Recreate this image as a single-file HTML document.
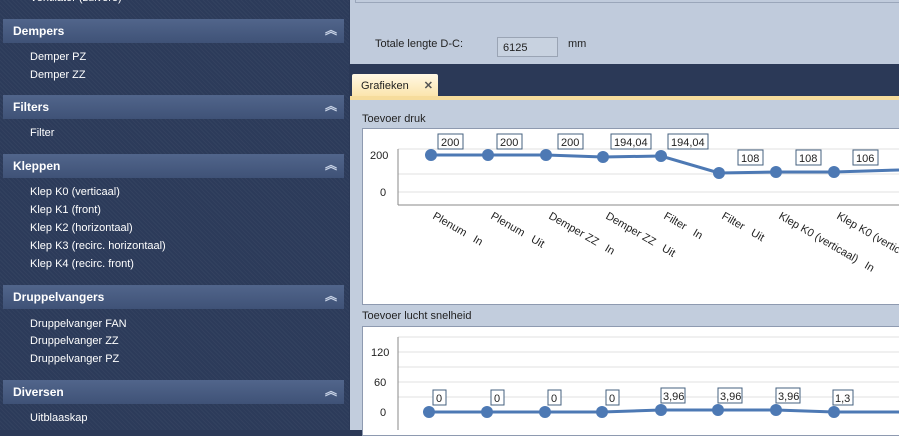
<!DOCTYPE html>
<html><head><meta charset="utf-8"><style>
*{margin:0;padding:0;box-sizing:border-box}
body{width:899px;height:430px;overflow:hidden;font-family:"Liberation Sans",Tahoma,sans-serif;font-size:11px;position:relative;background:#2b3957}
#side{position:absolute;left:0;top:0;width:349px;height:430px;background:#2c3b5a;background-image:repeating-linear-gradient(45deg,rgba(255,255,255,0.03) 0 1px,transparent 1px 3px)}
.hd{position:absolute;left:3px;width:341px;height:24px;background:linear-gradient(#51658b,#3f5277);color:#fff;font-weight:bold;font-size:12px;padding:5px 0 0 10px}
.hd span{position:absolute;right:7px;top:2px;font-size:12px;color:#c8d3e6}
.it{position:absolute;left:30px;color:#fff;font-size:11px}
#top{position:absolute;left:350px;top:0;width:549px;height:64px;background:#c0cbdc}
#top .box{position:absolute;left:5px;top:-2px;width:560px;height:5px;border:1px solid #9aa6ba}
#tab{position:absolute;left:352px;top:74px;width:86px;height:24px;background:linear-gradient(#fff8e4,#fbe3a8);border-radius:2px 2px 0 0;padding:5px 0 0 9px;color:#222}
#yl{position:absolute;left:350px;top:96px;width:549px;height:4px;background:#f6dc9c}
#main{position:absolute;left:350px;top:100px;width:549px;height:330px;background:#c2cddd}
.ttl{position:absolute;color:#222;font-size:11px}
.plot{position:absolute;background:#fff;border:1px solid #8e9ab0}
svg text{white-space:pre}
</style></head><body>
<div id="side">
<div class="it" style="top:-8px">Ventilator (zuivere)</div>
<div class="hd" style="top:19px">Dempers<span>︽</span></div>
<div class="it" style="top:51px">Demper PZ</div>
<div class="it" style="top:69px">Demper ZZ</div>
<div class="hd" style="top:95px">Filters<span>︽</span></div>
<div class="it" style="top:127px">Filter</div>
<div class="hd" style="top:154px">Kleppen<span>︽</span></div>
<div class="it" style="top:186px">Klep K0 (verticaal)</div>
<div class="it" style="top:204px">Klep K1 (front)</div>
<div class="it" style="top:222px">Klep K2 (horizontaal)</div>
<div class="it" style="top:240px">Klep K3 (recirc. horizontaal)</div>
<div class="it" style="top:258px">Klep K4 (recirc. front)</div>
<div class="hd" style="top:285px">Druppelvangers<span>︽</span></div>
<div class="it" style="top:318px">Druppelvanger FAN</div>
<div class="it" style="top:335px">Druppelvanger ZZ</div>
<div class="it" style="top:353px">Druppelvanger PZ</div>
<div class="hd" style="top:380px">Diversen<span>︽</span></div>
<div class="it" style="top:412px">Uitblaaskap</div>
</div>
<div id="top"><div class="box"></div>
<div class="ttl" style="left:25px;top:38px">Totale lengte D-C:</div>
<div style="position:absolute;left:147px;top:37px;width:61px;height:20px;border:1px solid #9aa4b4;background:#c8d2e0;padding:4px 0 0 5px;color:#222">6125</div>
<div class="ttl" style="left:218px;top:38px">mm</div>
</div>
<div id="tab">Grafieken <b style="color:#555;margin-left:12px">✕</b></div>
<div id="yl"></div>
<div id="main">
<div class="ttl" style="left:12px;top:13px">Toevoer druk</div>
<div class="plot" style="left:12px;top:28px;width:540px;height:177px"></div>
<div class="ttl" style="left:12px;top:210px">Toevoer lucht snelheid</div>
<div class="plot" style="left:12px;top:226px;width:540px;height:110px"></div>
</div>
<svg style="position:absolute;left:0;top:0" width="899" height="430" font-family="Liberation Sans,Tahoma,sans-serif" font-size="11">
<g stroke="#e0e0e0"><line x1="398" y1="149" x2="899" y2="149"/><line x1="398" y1="174" x2="899" y2="174"/><line x1="398" y1="192" x2="899" y2="192"/></g>
<line x1="398" y1="149" x2="398" y2="205" stroke="#888"/><line x1="398" y1="205" x2="899" y2="205" stroke="#888"/>
<text x="370" y="159" fill="#222">200</text><text x="380" y="196" fill="#222">0</text>
<polyline points="431,155 488,155 546,155 603,157 661,156 719,173 776,172 834,172 899,170" fill="none" stroke="#4d79b4" stroke-width="3"/>
<g fill="#4d79b4"><circle cx="431" cy="155" r="6"/><circle cx="488" cy="155" r="6"/><circle cx="546" cy="155" r="6"/><circle cx="603" cy="157" r="6"/><circle cx="661" cy="156" r="6"/><circle cx="719" cy="173" r="6"/><circle cx="776" cy="172" r="6"/><circle cx="834" cy="172" r="6"/></g>
<g fill="#fff" stroke="#45607f"><rect x="438" y="134" width="25" height="15"/><rect x="497" y="134" width="25" height="15"/><rect x="558" y="134" width="25" height="15"/><rect x="611" y="134" width="40" height="15"/><rect x="668" y="134" width="40" height="15"/><rect x="738" y="150" width="25" height="15"/><rect x="796" y="150" width="25" height="15"/><rect x="853" y="150" width="25" height="15"/></g>
<g fill="#222"><text x="441" y="146">200</text><text x="500" y="146">200</text><text x="561" y="146">200</text><text x="614" y="146">194,04</text><text x="671" y="146">194,04</text><text x="741" y="162">108</text><text x="799" y="162">108</text><text x="856" y="162">106</text></g>
<g fill="#222" font-size="11">
<text transform="translate(432,218) rotate(30)">Plenum   In</text>
<text transform="translate(490,218) rotate(30)">Plenum   Uit</text>
<text transform="translate(548,218) rotate(30)">Demper ZZ   In</text>
<text transform="translate(605,218) rotate(30)">Demper ZZ   Uit</text>
<text transform="translate(663,218) rotate(30)">Filter   In</text>
<text transform="translate(721,218) rotate(30)">Filter   Uit</text>
<text transform="translate(778,218) rotate(30)">Klep K0 (verticaal)   In</text>
<text transform="translate(836,218) rotate(30)">Klep K0 (verticaal)   Uit</text>
</g>
<g stroke="#e0e0e0"><line x1="398" y1="337" x2="899" y2="337"/><line x1="398" y1="352" x2="899" y2="352"/><line x1="398" y1="367" x2="899" y2="367"/><line x1="398" y1="382" x2="899" y2="382"/><line x1="398" y1="397" x2="899" y2="397"/></g>
<line x1="398" y1="337" x2="398" y2="430" stroke="#888"/>
<text x="371" y="356" fill="#222">120</text><text x="374" y="386" fill="#222">60</text><text x="380" y="416" fill="#222">0</text>
<polyline points="429,412 487,412 545,412 602,412 661,410 718,410 776,410 834,412 899,412" fill="none" stroke="#4d79b4" stroke-width="3"/>
<g fill="#4d79b4"><circle cx="429" cy="412" r="6"/><circle cx="487" cy="412" r="6"/><circle cx="545" cy="412" r="6"/><circle cx="602" cy="412" r="6"/><circle cx="661" cy="410" r="6"/><circle cx="718" cy="410" r="6"/><circle cx="776" cy="410" r="6"/><circle cx="834" cy="412" r="6"/></g>
<g fill="#fff" stroke="#45607f"><rect x="433" y="390" width="13" height="15"/><rect x="491" y="390" width="13" height="15"/><rect x="548" y="390" width="13" height="15"/><rect x="606" y="390" width="13" height="15"/><rect x="661" y="388" width="24" height="15"/><rect x="718" y="388" width="24" height="15"/><rect x="776" y="388" width="24" height="15"/><rect x="833" y="390" width="20" height="15"/></g>
<g fill="#222"><text x="436" y="402">0</text><text x="494" y="402">0</text><text x="551" y="402">0</text><text x="609" y="402">0</text><text x="663" y="400">3,96</text><text x="720" y="400">3,96</text><text x="778" y="400">3,96</text><text x="835" y="402">1,3</text></g>
</svg>
</body></html>
